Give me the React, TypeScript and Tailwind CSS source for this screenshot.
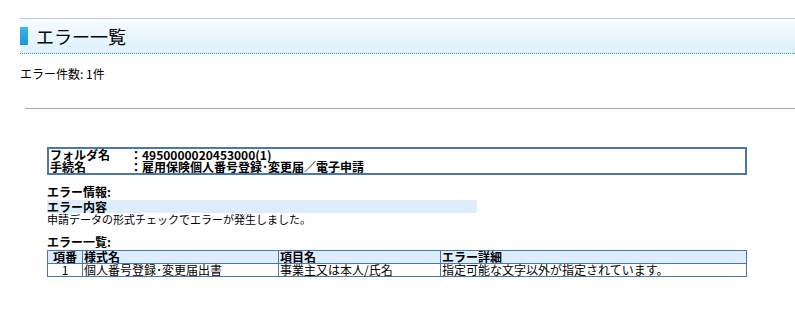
import React from "react";

const F = { fontFamily: '"MS UI Gothic","Noto Sans CJK JP","Noto Sans",sans-serif' };

export default function App() {
  return (
    <div className="w-[795px] h-[316px] bg-white text-black overflow-hidden" style={F}>
      <div className="pt-[18px]">
        <div className="ml-[20px] h-[36px] border-t border-[#c6c6c6] border-b border-b-[#2f9a9a] border-dotted bg-gradient-to-b from-[#f6fcff] to-[#def1fb] flex items-center" style={{ borderTopStyle: "solid" }}>
          <div className="w-[8px] h-[18px] bg-gradient-to-b from-[#3cb4ee] to-[#1a96d8]" />
          <div className="ml-[8px] text-[18px] leading-[20px]">エラー一覧</div>
        </div>
        <div className="ml-[20px] mt-[13px] text-[12px] leading-[14px]">エラー件数: 1件</div>
        <div className="ml-[25px] mt-[27px] h-px bg-[#a8a8a8]" />
        <div className="ml-[47px] w-[700px] mt-[38px] text-[12px]">
          <div className="border-2 border-[#4a78a8] px-[1px] leading-[12px] font-bold">
            <div className="flex"><span className="w-[80px]">フォルダ名</span><span>：4950000020453000(1)</span></div>
            <div className="flex"><span className="w-[80px]">手続名</span><span>：雇用保険個人番号登録･変更届／電子申請</span></div>
          </div>
          <div className="mt-[10px] font-bold leading-[14px]">エラー情報:</div>
          <div className="mt-[1px] w-[430px] bg-[#deedfd] font-bold leading-[13px]">エラー内容</div>
          <div className="leading-[13px] text-[11px]">申請データの形式チェックでエラーが発生しました。</div>
          <div className="mt-[9px] font-bold leading-[14px]">エラー一覧:</div>
          <table className="mt-px w-[700px] border-collapse table-fixed leading-[12px]">
            <colgroup>
              <col className="w-[35px]" />
              <col className="w-[196px]" />
              <col className="w-[162px]" />
              <col />
            </colgroup>
            <thead>
              <tr className="bg-[#deedfd] font-bold">
                <td className="border border-[#4a78a8] px-px text-center">項番</td>
                <td className="border border-[#4a78a8] px-px">様式名</td>
                <td className="border border-[#4a78a8] px-px">項目名</td>
                <td className="border border-[#4a78a8] px-px">エラー詳細</td>
              </tr>
            </thead>
            <tbody>
              <tr>
                <td className="border border-[#4a78a8] px-px text-center">1</td>
                <td className="border border-[#4a78a8] px-px">個人番号登録･変更届出書</td>
                <td className="border border-[#4a78a8] px-px">事業主又は本人/氏名</td>
                <td className="border border-[#4a78a8] px-px">指定可能な文字以外が指定されています。</td>
              </tr>
            </tbody>
          </table>
        </div>
      </div>
    </div>
  );
}
